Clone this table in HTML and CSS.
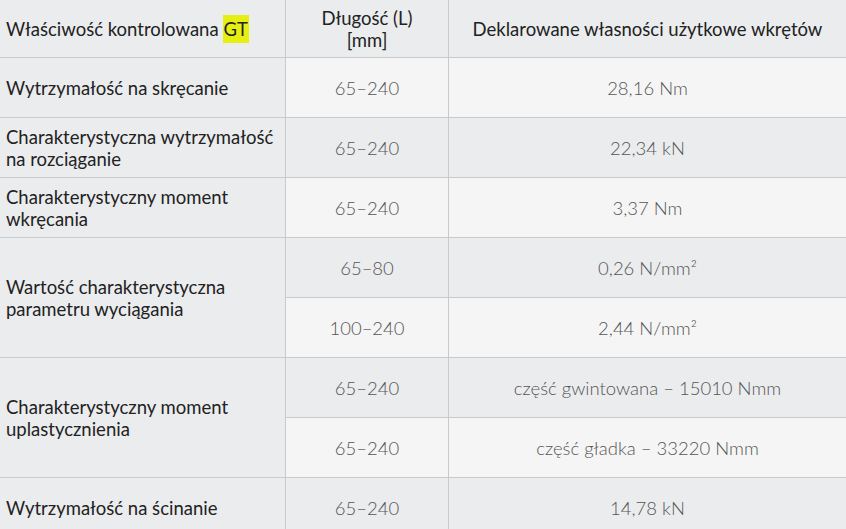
FILE: index.html
```html
<!DOCTYPE html>
<html lang="pl">
<head>
<meta charset="utf-8">
<title>Właściwości wkrętów</title>
<link rel="stylesheet" href="styles.css">
</head>
<body>
<div class="table">
  <div class="cell head name">Właściwość kontrolowana <span class="mark">GT</span></div>
  <div class="cell head mid">Długość (L)<br>[mm]</div>
  <div class="cell head mid">Deklarowane własności użytkowe wkrętów</div>

  <div class="cell name">Wytrzymałość na skręcanie</div>
  <div class="cell val light">65–240</div>
  <div class="cell val light">28,16 Nm</div>

  <div class="cell name">Charakterystyczna wytrzymałość<br>na rozciąganie</div>
  <div class="cell val">65–240</div>
  <div class="cell val">22,34 kN</div>

  <div class="cell name">Charakterystyczny moment<br>wkręcania</div>
  <div class="cell val light">65–240</div>
  <div class="cell val light">3,37 Nm</div>

  <div class="cell name span2">Wartość charakterystyczna<br>parametru wyciągania</div>
  <div class="cell val">65–80</div>
  <div class="cell val">0,26 N/mm²</div>
  <div class="cell val light">100–240</div>
  <div class="cell val light">2,44 N/mm²</div>

  <div class="cell name span2">Charakterystyczny moment<br>uplastycznienia</div>
  <div class="cell val">65–240</div>
  <div class="cell val">część gwintowana – 15010 Nmm</div>
  <div class="cell val light">65–240</div>
  <div class="cell val light">część gładka – 33220 Nmm</div>

  <div class="cell name">Wytrzymałość na ścinanie</div>
  <div class="cell val">65–240</div>
  <div class="cell val">14,78 kN</div>
</div>
</body>
</html>
```
FILE: styles.css
```css
html, body {
  margin: 0;
  padding: 0;
  background: #ebecee;
}
body {
  font-family: Lato, "Noto Sans", sans-serif;
  overflow: hidden;
}
.table {
  display: grid;
  grid-template-columns: 285px 162px 1fr;
  grid-template-rows: 57px repeat(9, 59px);
  gap: 1px;
  background: #c9cacc;
  width: 846px;
}
.cell {
  background: #ebecee;
  display: flex;
  align-items: center;
  font-size: 18.5px;
  line-height: 22px;
}
.head {
  color: #222;
}
.name {
  padding-left: 6px;
  color: #222;
}
.mid {
  justify-content: center;
  text-align: center;
}
.val {
  justify-content: center;
  text-align: center;
  color: #555;
  font-weight: 300;
}
.light {
  background: #f5f5f5;
}
.span2 {
  grid-row: span 2;
}
.mark {
  background: #e6ef12;
  padding: 3px 1px;
  margin-left: 4px;
}
```
